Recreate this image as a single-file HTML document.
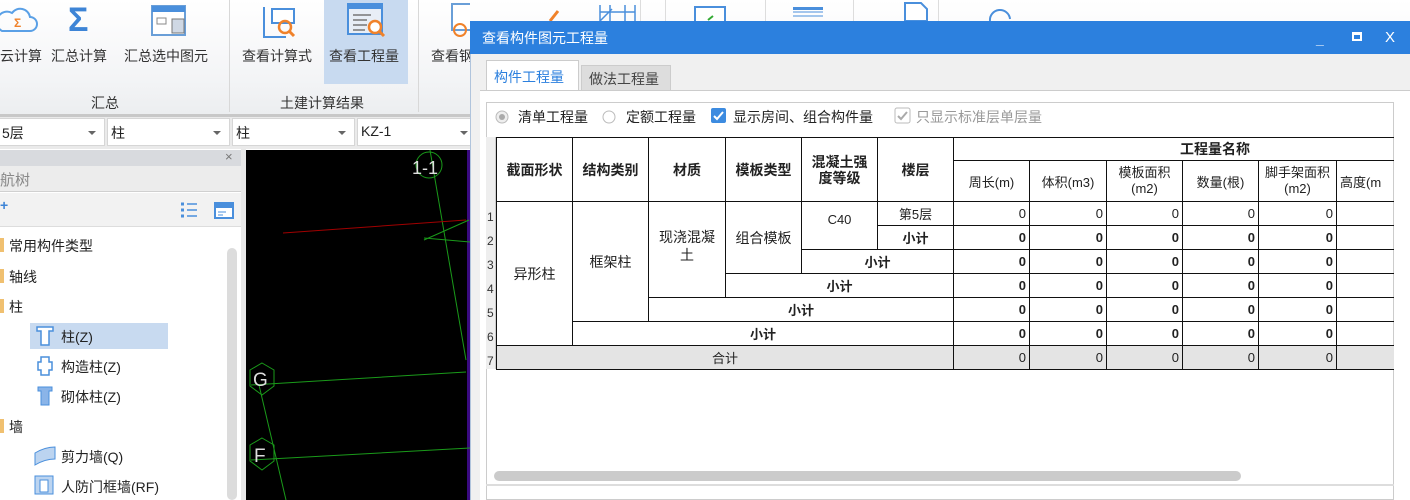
<!DOCTYPE html>
<html><head><meta charset="utf-8"><style>
*{margin:0;padding:0;box-sizing:border-box}
body{width:1410px;height:500px;overflow:hidden;position:relative;background:#fff;font-family:"Liberation Sans","Noto Sans CJK SC",sans-serif;font-size:14px;color:#222}
.a{position:absolute}
.rib{left:0;top:0;width:1410px;height:114px;background:linear-gradient(#fff,#f3f4f6 70%,#eceef0)}
.lbl{top:46px;font-size:14px;color:#333;white-space:nowrap}
.grp{top:93px;font-size:14px;color:#333}
.sep{top:0;width:1px;height:112px;background:#d8d8d8}
.combo{top:118px;height:28px;background:#fff;border:1px solid #d6d6d6;font-size:14px;padding:4px 3px;color:#222}
.combo:after{content:"";position:absolute;right:8px;top:12px;border:4px solid transparent;border-top:4px solid #666}
.tree{font-size:14px;color:#222;white-space:nowrap}
table{border-collapse:collapse;table-layout:fixed;font-family:"Liberation Sans","Noto Sans CJK SC",sans-serif}
td{border:1px solid #111;font-size:13px;text-align:center;height:24px;padding:0 3px;overflow:hidden;white-space:nowrap}
td.n{text-align:right}
td.b{font-weight:bold}
.hd td{font-weight:bold;font-size:14px}
</style></head><body>
<div class="a rib"></div>
<svg class="a" style="left:0;top:5px" width="40" height="30"><path d="M2 26 H30 A7 7 0 0 0 30 12 A10 10 0 0 0 12 8 A8 8 0 0 0 2 26Z" fill="none" stroke="#5aa0e6" stroke-width="2"/><text x="14" y="22" font-size="12" fill="#f0822a" font-weight="bold">Σ</text></svg>
<div class="a" style="left:68px;top:2px;font-size:34px;color:#3d84d6;font-weight:bold;line-height:36px">Σ</div>
<svg class="a" style="left:150px;top:5px" width="40" height="32"><rect x="2" y="1" width="33" height="29" fill="#fff" stroke="#6a9fd8" stroke-width="2"/><rect x="2" y="1" width="33" height="6" fill="#4a8fdc"/><rect x="7" y="13" width="9" height="6" fill="none" stroke="#888"/><rect x="22" y="14" width="12" height="14" fill="#cfd8e4" stroke="#777"/></svg>
<svg class="a" style="left:262px;top:5px" width="36" height="34"><path d="M2 2V32H24" fill="none" stroke="#4a8fdc" stroke-width="2"/><rect x="10" y="4" width="22" height="14" fill="#fff" stroke="#4a8fdc" stroke-width="2"/><circle cx="23" cy="22" r="6" fill="none" stroke="#f0822a" stroke-width="2.5"/><path d="M27 26l5 5" stroke="#f0822a" stroke-width="3"/></svg>
<div class="a" style="left:324px;top:0;width:84px;height:84px;background:#c8daf0"></div>
<svg class="a" style="left:347px;top:3px" width="40" height="36"><rect x="1" y="1" width="34" height="30" fill="#e8eef6" stroke="#4a8fdc" stroke-width="2"/><rect x="1" y="1" width="34" height="5" fill="#4a8fdc"/><path d="M6 12h18M6 17h14M6 22h14M6 27h12" stroke="#777" stroke-width="1.5"/><circle cx="28" cy="24" r="6" fill="#fff" stroke="#f0822a" stroke-width="2.5"/><path d="M32 28l5 5" stroke="#f0822a" stroke-width="3"/></svg>
<svg class="a" style="left:450px;top:2px" width="20" height="36"><rect x="2" y="2" width="20" height="26" fill="#fff" stroke="#6a9fd8" stroke-width="2"/><circle cx="10" cy="28" r="6" fill="none" stroke="#f0822a" stroke-width="2"/></svg>
<div class="a lbl" style="left:0;">云计算</div>
<div class="a lbl" style="left:51px">汇总计算</div>
<div class="a lbl" style="left:124px">汇总选中图元</div>
<div class="a lbl" style="left:242px">查看计算式</div>
<div class="a lbl" style="left:329px">查看工程量</div>
<div class="a lbl" style="left:431px">查看钢</div>
<div class="a grp" style="left:91px">汇总</div>
<div class="a grp" style="left:280px">土建计算结果</div>
<div class="a sep" style="left:229px"></div>
<div class="a sep" style="left:418px"></div>
<div class="a" style="left:0;top:114px;width:480px;height:3px;background:#c8c8c8"></div>
<div class="a" style="left:0;top:117px;width:480px;height:32px;background:#eaeaea"></div>
<div class="a combo" style="left:-2px;width:107px">5层</div>
<div class="a combo" style="left:107px;width:123px">柱</div>
<div class="a combo" style="left:232px;width:123px">柱</div>
<div class="a combo" style="left:357px;width:120px">KZ-1</div>
<div class="a" style="left:0;top:149px;width:241px;height:351px;background:#fff"></div>
<div class="a" style="left:0;top:150px;width:241px;height:16px;background:#d8dade"></div>
<div class="a" style="left:225px;top:149px;font-size:13px;color:#777">×</div>
<div class="a" style="left:0;top:166px;width:241px;height:26px;background:#ececec;border-bottom:1px solid #d0d0d0;font-size:15px;color:#888;padding:3px 0 0 0">航树</div>
<div class="a" style="left:0;top:193px;width:241px;height:34px;background:#f2f2f2;border-bottom:1px solid #ddd"></div>
<div class="a" style="left:0;top:197px;color:#3d84d6;font-weight:bold">+</div>
<svg class="a" style="left:180px;top:202px" width="18" height="16"><path d="M1 2h3M1 8h3M1 14h3" stroke="#4a8fdc" stroke-width="3"/><path d="M7 2h10M7 8h10M7 14h10" stroke="#4a8fdc" stroke-width="1.5"/></svg>
<svg class="a" style="left:214px;top:202px" width="20" height="18"><rect x="1" y="1" width="18" height="15" fill="#fff" stroke="#4a8fdc" stroke-width="2"/><rect x="1" y="1" width="18" height="5" fill="#4a8fdc"/><path d="M4 10h8M4 13h5" stroke="#4a8fdc"/></svg>
<div class="a" style="left:241px;top:149px;width:5px;height:351px;background:#e8e8e8"></div>
<div class="a" style="left:227px;top:248px;width:10px;height:252px;background:#dcdcdc;border-radius:5px"></div>
<div class="a" style="left:30px;top:323px;width:138px;height:26px;background:#c8daf0"></div>
<div class="a tree" style="left:9px;top:236px">常用构件类型</div>
<div class="a tree" style="left:9px;top:267px">轴线</div>
<div class="a tree" style="left:9px;top:297px">柱</div>
<div class="a tree" style="left:61px;top:327px">柱(Z)</div>
<div class="a tree" style="left:61px;top:357px">构造柱(Z)</div>
<div class="a tree" style="left:61px;top:387px">砌体柱(Z)</div>
<div class="a tree" style="left:9px;top:417px">墙</div>
<div class="a tree" style="left:61px;top:447px">剪力墙(Q)</div>
<div class="a tree" style="left:61px;top:477px">人防门框墙(RF)</div>
<div class="a" style="left:0;top:238px;width:4px;height:14px;background:#f0c070"></div>
<div class="a" style="left:0;top:269px;width:4px;height:14px;background:#f0c070"></div>
<div class="a" style="left:0;top:299px;width:4px;height:14px;background:#f0c070"></div>
<div class="a" style="left:0;top:419px;width:4px;height:14px;background:#f0c070"></div>
<svg class="a" style="left:35px;top:325px" width="20" height="22"><path d="M2 2h16v4h-4v14h-8V6H2z" fill="#fff" stroke="#4a8fdc" stroke-width="1.5"/></svg>
<svg class="a" style="left:35px;top:355px" width="20" height="22"><path d="M6 2h8v5h3v8h-3v5H6v-5H3V7h3z" fill="#fff" stroke="#4a8fdc" stroke-width="1.5"/></svg>
<svg class="a" style="left:35px;top:385px" width="20" height="22"><path d="M3 2h14v4h-3v14H6V6H3z" fill="#8ab4e8" stroke="#4a8fdc"/></svg>
<svg class="a" style="left:33px;top:445px" width="24" height="22"><path d="M2 8Q12 2 22 2v12Q12 14 2 20z" fill="#bcd4f0" stroke="#4a8fdc"/></svg>
<svg class="a" style="left:34px;top:475px" width="20" height="22"><rect x="1" y="1" width="18" height="18" fill="#bcd4f0" stroke="#4a8fdc"/><rect x="6" y="5" width="8" height="12" fill="#fff" stroke="#4a8fdc"/></svg>
<svg class="a" style="left:246px;top:150px" width="224" height="350"><rect width="224" height="350" fill="#000"/><rect x="221" y="0" width="3" height="350" fill="#3a0a80"/>
<path d="M184 0L220 210" stroke="#1a9a1a"/><path d="M37 83L220 70" stroke="#a00000"/><path d="M178 90L223 70M178 88L224 92" stroke="#1a9a1a"/>
<circle cx="183" cy="15" r="13" fill="none" stroke="#1a9a1a"/><text x="166" y="24" fill="#ddd" font-size="18">1-1</text>
<path d="M5 235L220 222M5 310L224 298M13 235L40 350" stroke="#1a9a1a"/>
<polygon points="16,213 28,220 28,236 16,245 4,236 4,220" fill="none" stroke="#1a9a1a"/><text x="7" y="236" fill="#ddd" font-size="19">G</text>
<polygon points="16,288 28,295 28,311 16,320 4,311 4,295" fill="none" stroke="#1a9a1a"/><text x="8" y="312" fill="#ddd" font-size="19">F</text>
</svg>
<div class="a" style="left:640px;top:0;width:1px;height:21px;background:#ddd"></div>
<div class="a" style="left:665px;top:0;width:1px;height:21px;background:#ddd"></div>
<div class="a" style="left:765px;top:0;width:1px;height:21px;background:#ddd"></div>
<div class="a" style="left:853px;top:0;width:1px;height:21px;background:#ddd"></div>
<div class="a" style="left:938px;top:0;width:1px;height:21px;background:#ddd"></div>
<svg class="a" style="left:540px;top:0" width="500" height="21"><path d="M10 21l8-10" stroke="#f0822a" stroke-width="3"/><path d="M60 21V5M95 21V5M60 12h35M70 5v16M85 5v16M60 21l12-12" stroke="#4a8fdc" stroke-width="1.5"/><rect x="155" y="7" width="30" height="16" fill="#fff" stroke="#4a8fdc" stroke-width="2"/><path d="M168 20l5-4" stroke="#3a3" stroke-width="2"/><rect x="253" y="7" width="30" height="3" fill="#4a8fdc"/><path d="M253 12h30M253 16h30" stroke="#4a8fdc"/><path d="M365 3h16l6 6v12h-22z" fill="#fff" stroke="#4a8fdc" stroke-width="2"/><path d="M450 21a10 10 0 0 1 20-2" fill="none" stroke="#4a8fdc" stroke-width="2"/></svg>
<div class="a" style="left:470px;top:21px;width:940px;height:479px;background:#f0f0f0;border-left:1px solid #b0c4dc"></div>
<div class="a" style="left:470px;top:21px;width:940px;height:33px;background:#2c80de;color:#fff;font-size:14px;padding:7px 12px">查看构件图元工程量</div>
<div class="a" style="left:1316px;top:31px;color:#fff;font-size:14px;font-weight:bold">_</div>
<div class="a" style="left:1352px;top:32px;width:10px;height:9px;border:2px solid #fff;border-top-width:3px"></div>
<div class="a" style="left:1385px;top:29px;color:#fff;font-size:15px">X</div>
<div class="a" style="left:486px;top:60px;width:93px;height:31px;background:#fff;border:1px solid #ccc;border-bottom:none;color:#2c80de;padding:6px 7px;font-size:14px">构件工程量</div>
<div class="a" style="left:581px;top:65px;width:90px;height:26px;background:#ddd;border:1px solid #ccc;padding:3px 7px;color:#444;font-size:14px">做法工程量</div>
<div class="a" style="left:480px;top:90px;width:930px;height:410px;background:#fff;border-top:1px solid #ccc"></div>
<div class="a" style="left:486px;top:102px;width:908px;height:398px;background:#fff;border:1px solid #ccc"></div>
<svg class="a" style="left:494px;top:108px" width="20" height="20"><circle cx="8" cy="9" r="6" fill="#eee" stroke="#bbb"/><circle cx="8" cy="9" r="3" fill="#aaa"/></svg>
<div class="a" style="left:518px;top:107px;font-size:14px">清单工程量</div>
<svg class="a" style="left:601px;top:108px" width="20" height="20"><circle cx="8" cy="9" r="6" fill="#fff" stroke="#bbb"/></svg>
<div class="a" style="left:626px;top:107px;font-size:14px">定额工程量</div>
<svg class="a" style="left:710px;top:107px" width="18" height="18"><rect x="1" y="1" width="15" height="15" rx="2" fill="#3c8be0"/><path d="M4 9l3 3 6-7" fill="none" stroke="#fff" stroke-width="2"/></svg>
<div class="a" style="left:733px;top:107px;font-size:14px">显示房间、组合构件量</div>
<svg class="a" style="left:894px;top:107px" width="18" height="18"><rect x="1" y="1" width="15" height="15" rx="2" fill="#fff" stroke="#bbb"/><path d="M4 9l3 3 6-7" fill="none" stroke="#aaa" stroke-width="2"/></svg>
<div class="a" style="left:916px;top:107px;font-size:14px;color:#999">只显示标准层单层量</div>
<div class="a" style="left:486px;top:137px;width:10px;height:232px;background:#eee;border-right:1px solid #ccc"></div>
<div class="a" style="left:487px;top:205px;font-size:12px;line-height:24px;color:#333">1<br>2<br>3<br>4<br>5<br>6<br>7</div>
<div class="a" style="left:496px;top:137px;width:898px;height:240px;overflow:hidden">
<table style="width:900px">
<colgroup><col style="width:76px"><col style="width:76px"><col style="width:77px"><col style="width:76px"><col style="width:76px"><col style="width:76px"><col style="width:76px"><col style="width:77px"><col style="width:76px"><col style="width:76px"><col style="width:78px"><col style="width:60px"></colgroup>
<tr class="hd" style="height:23px"><td rowspan="2" style="height:64px">截面形状</td><td rowspan="2">结构类别</td><td rowspan="2">材质</td><td rowspan="2">模板类型</td><td rowspan="2" style="line-height:16px;white-space:normal">混凝土强度等级</td><td rowspan="2">楼层</td><td colspan="6" style="height:23px;text-align:left;padding-left:226px">工程量名称</td></tr>
<tr style="height:41px"><td style="height:41px">周长(m)</td><td>体积(m3)</td><td style="white-space:normal;line-height:16px">模板面积(m2)</td><td>数量(根)</td><td style="white-space:normal;line-height:16px">脚手架面积(m2)</td><td style="text-align:left">高度(m</td></tr>
<tr><td rowspan="6" style="font-size:14px">异形柱</td><td rowspan="5" style="font-size:14px">框架柱</td><td rowspan="4" style="font-size:14px;line-height:18px;vertical-align:top;padding-top:26px">现浇混凝<br>土</td><td rowspan="3" style="font-size:14px">组合模板</td><td rowspan="2" style="vertical-align:top;padding-top:10px">C40</td><td>第5层</td><td class="n">0</td><td class="n">0</td><td class="n">0</td><td class="n">0</td><td class="n">0</td><td></td></tr>
<tr><td class="b">小计</td><td class="n b">0</td><td class="n b">0</td><td class="n b">0</td><td class="n b">0</td><td class="n b">0</td><td></td></tr>
<tr><td colspan="2" class="b">小计</td><td class="n b">0</td><td class="n b">0</td><td class="n b">0</td><td class="n b">0</td><td class="n b">0</td><td></td></tr>
<tr><td colspan="3" class="b">小计</td><td class="n b">0</td><td class="n b">0</td><td class="n b">0</td><td class="n b">0</td><td class="n b">0</td><td></td></tr>
<tr><td colspan="4" class="b">小计</td><td class="n b">0</td><td class="n b">0</td><td class="n b">0</td><td class="n b">0</td><td class="n b">0</td><td></td></tr>
<tr><td colspan="5" class="b">小计</td><td class="n b">0</td><td class="n b">0</td><td class="n b">0</td><td class="n b">0</td><td class="n b">0</td><td></td></tr>
<tr style="background:#e4e4e4"><td colspan="6">合计</td><td class="n">0</td><td class="n">0</td><td class="n">0</td><td class="n">0</td><td class="n">0</td><td></td></tr>
</table></div>
<div class="a" style="left:494px;top:471px;width:747px;height:10px;background:#cbcbcb;border-radius:5px"></div>
<div class="a" style="left:486px;top:484px;width:908px;height:2px;background:#ddd"></div>
</body></html>
